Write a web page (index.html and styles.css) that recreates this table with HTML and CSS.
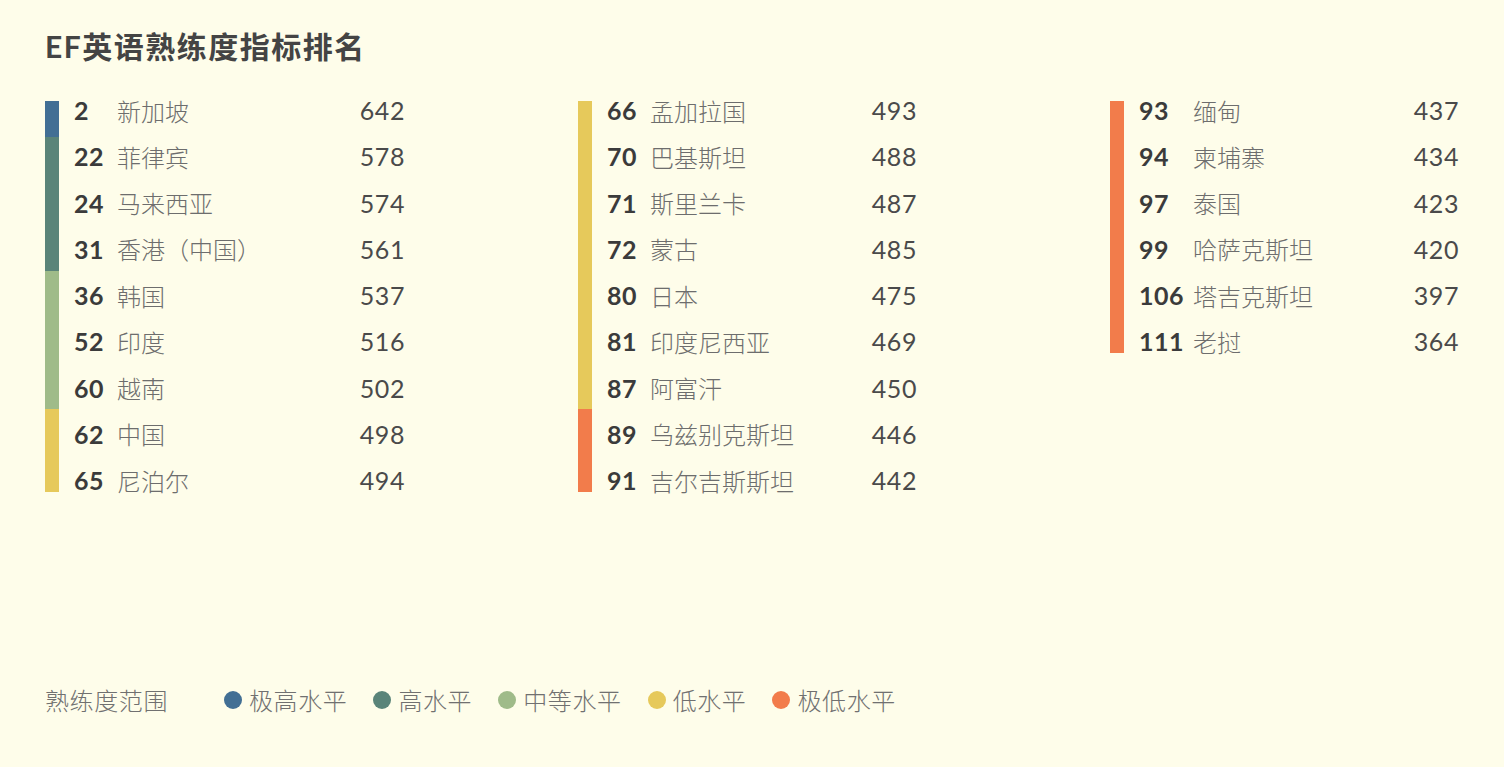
FILE: index.html
```html
<!DOCTYPE html>
<html lang="zh-CN">

<head>
    <meta charset="UTF-8">
    <meta name="viewport" content="width=device-width, initial-scale=1.0">
    <title>EF英语熟练度指标排名</title>
    <link rel="stylesheet" href="styles.css">
</head>

<body>
    <div class="page">
        <h1 class="title">EF英语熟练度指标排名</h1>

        <div class="columns">
            <!-- column 1 -->
            <div class="col col-one">
                <div class="bar"></div>
                <div class="rows">
                    <div class="row"><span class="rank">2</span><span class="name">新加坡</span><span class="score">642</span></div>
                    <div class="row"><span class="rank">22</span><span class="name">菲律宾</span><span class="score">578</span></div>
                    <div class="row"><span class="rank">24</span><span class="name">马来西亚</span><span class="score">574</span></div>
                    <div class="row"><span class="rank">31</span><span class="name">香港（中国）</span><span class="score">561</span></div>
                    <div class="row"><span class="rank">36</span><span class="name">韩国</span><span class="score">537</span></div>
                    <div class="row"><span class="rank">52</span><span class="name">印度</span><span class="score">516</span></div>
                    <div class="row"><span class="rank">60</span><span class="name">越南</span><span class="score">502</span></div>
                    <div class="row"><span class="rank">62</span><span class="name">中国</span><span class="score">498</span></div>
                    <div class="row"><span class="rank">65</span><span class="name">尼泊尔</span><span class="score">494</span></div>
                </div>
            </div>

            <!-- column 2 -->
            <div class="col col-two">
                <div class="bar"></div>
                <div class="rows">
                    <div class="row"><span class="rank">66</span><span class="name">孟加拉国</span><span class="score">493</span></div>
                    <div class="row"><span class="rank">70</span><span class="name">巴基斯坦</span><span class="score">488</span></div>
                    <div class="row"><span class="rank">71</span><span class="name">斯里兰卡</span><span class="score">487</span></div>
                    <div class="row"><span class="rank">72</span><span class="name">蒙古</span><span class="score">485</span></div>
                    <div class="row"><span class="rank">80</span><span class="name">日本</span><span class="score">475</span></div>
                    <div class="row"><span class="rank">81</span><span class="name">印度尼西亚</span><span class="score">469</span></div>
                    <div class="row"><span class="rank">87</span><span class="name">阿富汗</span><span class="score">450</span></div>
                    <div class="row"><span class="rank">89</span><span class="name">乌兹别克斯坦</span><span class="score">446</span></div>
                    <div class="row"><span class="rank">91</span><span class="name">吉尔吉斯斯坦</span><span class="score">442</span></div>
                </div>
            </div>

            <!-- column 3 -->
            <div class="col col-three">
                <div class="bar"></div>
                <div class="rows">
                    <div class="row"><span class="rank">93</span><span class="name">缅甸</span><span class="score">437</span></div>
                    <div class="row"><span class="rank">94</span><span class="name">柬埔寨</span><span class="score">434</span></div>
                    <div class="row"><span class="rank">97</span><span class="name">泰国</span><span class="score">423</span></div>
                    <div class="row"><span class="rank">99</span><span class="name">哈萨克斯坦</span><span class="score">420</span></div>
                    <div class="row"><span class="rank">106</span><span class="name">塔吉克斯坦</span><span class="score">397</span></div>
                    <div class="row"><span class="rank">111</span><span class="name">老挝</span><span class="score">364</span></div>
                </div>
            </div>
        </div>

        <div class="legend">
            <span class="legend-title">熟练度范围</span>
            <span class="legend-item"><i class="dot very-high"></i>极高水平</span>
            <span class="legend-item"><i class="dot high"></i>高水平</span>
            <span class="legend-item"><i class="dot mid"></i>中等水平</span>
            <span class="legend-item"><i class="dot low"></i>低水平</span>
            <span class="legend-item"><i class="dot very-low"></i>极低水平</span>
        </div>
    </div>
</body>

</html>
```

FILE: styles.css
```css
body {
    margin: 0;
    padding: 0;
    background-color: #fefdea;
    font-family: "Lato", "Noto Sans CJK SC", sans-serif;
}

.page {
    width: 1504px;
    height: 767px;
    padding: 28px 0 0 45px;
    box-sizing: border-box;
    display: flex;
    flex-direction: column;
}

.title {
    margin: 0;
    font-size: 30px;
    line-height: 36px;
    font-weight: 700;
    letter-spacing: 1.5px;
    color: #444444;
}

.columns {
    display: flex;
    align-items: flex-start;
    margin-top: 24px;
}

.col {
    display: flex;
}

.col-one {
    width: 360px;
    margin-right: 173px;
}

.col-two {
    width: 339px;
    margin-right: 193px;
}

.col-three {
    width: 349px;
}

.bar {
    width: 14px;
    flex-shrink: 0;
    margin: 13px 0 12px 0;
}

.col-one .bar {
    background: linear-gradient(to bottom,
            #426f94 0, #426f94 36px,
            #5a8479 36px, #5a8479 170px,
            #9fbb89 170px, #9fbb89 308px,
            #e6c95b 308px);
}

.col-two .bar {
    background: linear-gradient(to bottom,
            #e6c95b 0, #e6c95b 308px,
            #f27c4b 308px);
}

.col-three .bar {
    background: #f27c4b;
    margin-bottom: 13px;
}

.rows {
    flex: 1;
    display: flex;
    flex-direction: column;
}

.row {
    height: 46.25px;
    box-sizing: border-box;
    padding: 0 0 2px 15px;
    display: flex;
    align-items: center;
    font-size: 25px;
    letter-spacing: 0.5px;
}

.rank {
    width: 43px;
    font-weight: 700;
    color: #3b3b3b;
}

.col-three .rank {
    width: 54px;
}

.name {
    flex: 1;
    font-family: "Noto Sans CJK SC", sans-serif;
    font-size: 24px;
    letter-spacing: 0;
    font-weight: 300;
    color: #6d6d6d;
}

.score {
    color: #4a4a4a;
    letter-spacing: 0.6px;
}

.legend {
    margin-top: auto;
    margin-bottom: 50px;
    display: flex;
    align-items: center;
    font-family: "Noto Sans CJK SC", sans-serif;
    font-weight: 300;
    font-size: 24px;
    letter-spacing: 0.6px;
    color: #707070;
}

.legend-title {
    margin-right: 56px;
}

.legend-item {
    display: flex;
    align-items: center;
    margin-right: 26px;
}

.dot {
    width: 18px;
    height: 18px;
    border-radius: 50%;
    margin-right: 7px;
}

.very-high {
    background-color: #426f94;
}

.high {
    background-color: #5a8479;
}

.mid {
    background-color: #9fbb89;
}

.low {
    background-color: #e6c95b;
}

.very-low {
    background-color: #f27c4b;
}
```
